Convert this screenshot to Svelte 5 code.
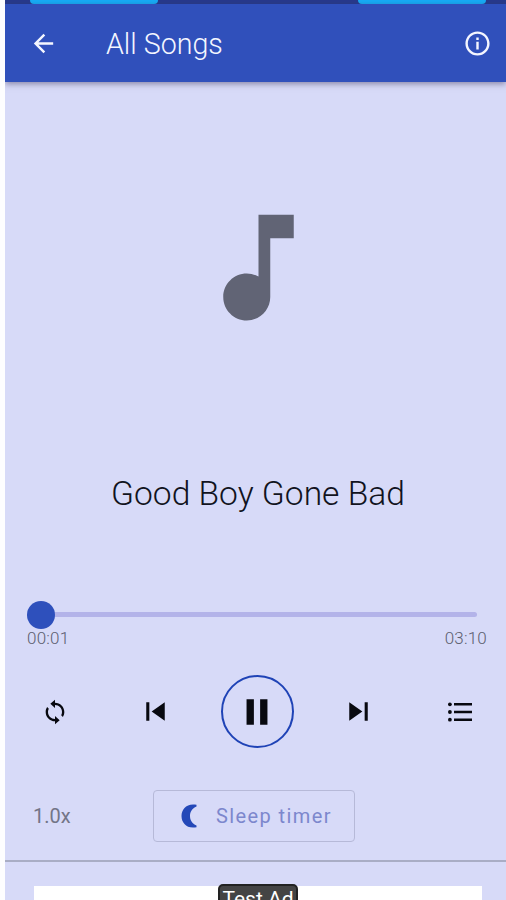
<script lang="ts">
  const title = "Good Boy Gone Bad";
  const duration = 190;

  let position = $state(1);
  let playing = $state(true);
  let progress = $derived((position / duration) * 100);

  function formatTime(seconds: number) {
    const m = Math.floor(seconds / 60);
    const s = seconds % 60;
    return `${String(m).padStart(2, "0")}:${String(s).padStart(2, "0")}`;
  }
</script>

<div class="player">
  <div class="status">
    <span class="pill"></span>
    <span class="pill"></span>
  </div>

  <header class="toolbar">
    <button aria-label="Back">
      <svg width="29" height="29" viewBox="0 0 24 24" fill="currentColor">
        <path d="M20 11H7.83l5.59-5.59L12 4l-8 8 8 8 1.41-1.41L7.83 13H20v-2z" />
      </svg>
    </button>
    <h1>All Songs</h1>
    <button aria-label="Info">
      <svg width="29" height="29" viewBox="0 0 24 24" fill="currentColor">
        <path d="M11 7h2v2h-2zm0 3.500h2V17h-2zm1-8.500C6.48 2 2 6.48 2 12s4.48 10 10 10 10-4.48 10-10S17.52 2 12 2zm0 18c-4.41 0-8-3.59-8-8s3.59-8 8-8 8 3.59 8 8-3.59 8-8 8z" />
      </svg>
    </button>
  </header>

  <div class="artwork">
    <svg width="141" height="141" viewBox="0 0 24 24" fill="currentColor">
      <path d="M12 3v10.55c-.59-.34-1.27-.55-2-.55-2.21 0-4 1.79-4 4s1.79 4 4 4 4-1.79 4-4V7h4V3h-6z" />
    </svg>
  </div>

  <div class="title">{title}</div>

  <div class="seek">
    <div class="track">
      <div class="thumb" style="left: {progress}%"></div>
    </div>
    <div class="times">
      <span>{formatTime(position)}</span>
      <span>{formatTime(duration)}</span>
    </div>
  </div>

  <div class="controls">
    <button aria-label="Repeat">
      <svg width="28" height="28" viewBox="0 0 24 24" fill="currentColor">
        <path d="M12 4V1.500L8 5l4 3.500V6c3.310 0 6 2.690 6 6 0 1.010-.25 1.970-.7 2.800l1.460 1.460C19.540 15.030 20 13.570 20 12c0-4.420-3.580-8-8-8zm0 14c-3.310 0-6-2.690-6-6 0-1.010.25-1.970.7-2.800L5.240 7.740C4.460 8.970 4 10.430 4 12c0 4.420 3.580 8 8 8v2.500l4-3.500-4-3.500V18z" />
      </svg>
    </button>
    <button aria-label="Previous">
      <svg width="37" height="37" viewBox="0 0 24 24" fill="currentColor">
        <path d="M6 6h2v12H6zm3.500 6 8.500 6V6z" />
      </svg>
    </button>
    <button class="play" aria-label="Pause" onclick={() => (playing = !playing)}>
      <svg width="44" height="44" viewBox="0 0 24 24" fill="currentColor">
        {#if playing}
          <path d="M6.300 19h4V5h-4zm7.400-14v14h4V5z" />
        {:else}
          <path d="M8 5v14l11-7z" />
        {/if}
      </svg>
    </button>
    <button aria-label="Next">
      <svg width="37" height="37" viewBox="0 0 24 24" fill="currentColor">
        <path d="M6 18l8.500-6L6 6v12zM16 6v12h2V6h-2z" />
      </svg>
    </button>
    <button aria-label="Queue">
      <svg width="24" height="20" viewBox="0 0 24 20" fill="currentColor">
        <path d="M6 1h18v2.600H6zM6 8.700h18v2.600H6zM6 16.400h18V19H6z" />
        <circle cx="1.900" cy="2.300" r="1.900" />
        <circle cx="1.900" cy="10" r="1.900" />
        <circle cx="1.900" cy="17.700" r="1.900" />
      </svg>
    </button>
  </div>

  <div class="options">
    <span class="speed">1.0x</span>
    <button class="sleep">
      <svg width="16" height="24" viewBox="0 0 16 24" fill="currentColor">
        <path d="M15.500.8C6-1.200.5 5 .5 12s5.500 13.200 15 11.200v-1.700C11 19.500 9 16 9 12s2-7.500 6.500-9.500z" />
      </svg>
      Sleep timer
    </button>
  </div>

  <div class="ad">
    <div class="banner"><span class="ad-label">Test Ad</span></div>
  </div>
</div>

<style>
  :global(body) {
    background: #fdfdff;
    overflow: hidden;
  }

  .player {
    display: flex;
    flex-direction: column;
    height: 900px;
    margin-left: 5px;
    overflow: hidden;
    background: #d7daf8;
    font-family: Roboto, "Liberation Sans", sans-serif;
  }

  .player > * {
    flex-shrink: 0;
  }

  button {
    font-family: inherit;
    color: inherit;
    background: none;
    border: none;
    padding: 0;
    cursor: pointer;
  }

  svg {
    display: block;
  }

  .status {
    display: flex;
    justify-content: space-between;
    height: 4px;
    padding: 0 20px 0 25px;
    background: #273a8c;
  }

  .pill {
    width: 128px;
    background: #16adf7;
    border-radius: 0 0 6px 6px;
  }

  .toolbar {
    display: flex;
    align-items: center;
    height: 78px;
    padding: 0 14px 0 24px;
    color: #f4f6ff;
    background: #3050bb;
    box-shadow: 0 2px 6px rgba(60, 50, 90, 0.5);
  }

  h1 {
    flex: 1;
    margin: 2px 0 0 48px;
    font-size: 28.6px;
    font-weight: 300;
  }

  .artwork {
    display: flex;
    justify-content: center;
    padding: 115px 0 0 5px;
    color: #616475;
  }

  .title {
    margin-top: 133px;
    padding-left: 5px;
    height: 46px;
    line-height: 46px;
    color: #111320;
    font-size: 33.6px;
    font-weight: 300;
    text-align: center;
  }

  .seek {
    margin-top: 95px;
    padding: 0 19px 0 22px;
  }

  .track {
    position: relative;
    height: 5px;
    margin: 0 10px 0 12px;
    background: #b3b3e9;
    border-radius: 3px;
  }

  .thumb {
    position: absolute;
    top: 50%;
    width: 28px;
    height: 28px;
    margin: -14px 0 0 -14px;
    background: #2e50bc;
    border-radius: 50%;
  }

  .times {
    display: flex;
    justify-content: space-between;
    margin-top: 11px;
    color: #5c5e70;
    font-size: 17px;
    font-weight: 300;
    letter-spacing: 0.2px;
    line-height: 20px;
  }

  .controls {
    display: flex;
    align-items: center;
    justify-content: space-between;
    margin-top: 27px;
    padding: 0 10px 0 13px;
    color: #080910;
  }

  .controls button {
    display: flex;
    align-items: center;
    justify-content: center;
    box-sizing: border-box;
    width: 73px;
    height: 73px;
  }

  .controls .play {
    border: 2px solid #1f43b6;
    border-radius: 50%;
  }

  .options {
    display: flex;
    align-items: center;
    height: 52px;
    margin-top: 42px;
    padding-left: 28px;
    color: #737587;
  }

  .speed {
    width: 120px;
    font-size: 20px;
  }

  .sleep {
    display: flex;
    align-items: center;
    box-sizing: border-box;
    gap: 19px;
    width: 202px;
    height: 52px;
    padding-left: 27px;
    border: 1px solid #b6b9d8;
    border-radius: 4px;
    color: #7c87cd;
    font-size: 20px;
    letter-spacing: 1.4px;
    white-space: nowrap;
  }

  .sleep svg {
    color: #2448b8;
  }

  .ad {
    margin-top: 18px;
    padding: 24px 24px 0 29px;
    border-top: 2px solid #a9adc5;
  }

  .banner {
    display: flex;
    justify-content: center;
    height: 60px;
    background: #fff;
  }

  .ad-label {
    box-sizing: border-box;
    width: 80px;
    height: 30px;
    margin-top: -2px;
    border: 2px solid #222;
    border-radius: 5px;
    color: #fff;
    background: #444;
    font-size: 21px;
    line-height: 26px;
    text-align: center;
    white-space: nowrap;
  }
</style>
